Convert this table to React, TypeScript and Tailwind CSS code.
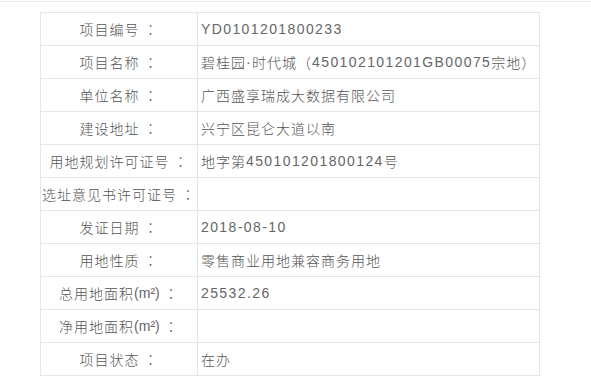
const latin = { fontFamily: '"Liberation Sans", sans-serif' };

// wrap ASCII runs so digits get Arial widths
function Mixed({ text, wide }: { text: string; wide?: boolean }) {
  const parts = text.split(/([\x20-\x7e\xb2\xb7]+)/);
  return (
    <>
      {parts.map((p, i) =>
        i % 2 === 1 ? (
          <span
            key={i}
            style={latin}
            className={wide ? "tracking-[1.4px] text-[#666]" : "tracking-normal text-[#666]"}
          >
            {p}
          </span>
        ) : (
          p
        )
      )}
    </>
  );
}

const rows: [string, string][] = [
  ["项目编号", "YD0101201800233"],
  ["项目名称", "碧桂园·时代城（450102101201GB00075宗地）"],
  ["单位名称", "广西盛享瑞成大数据有限公司"],
  ["建设地址", "兴宁区昆仑大道以南"],
  ["用地规划许可证号", "地字第450101201800124号"],
  ["选址意见书许可证号", ""],
  ["发证日期", "2018-08-10"],
  ["用地性质", "零售商业用地兼容商务用地"],
  ["总用地面积(m²)", "25532.26"],
  ["净用地面积(m²)", ""],
  ["项目状态", "在办"],
];

export default function App() {
  return (
    <div className="w-[591px] h-[380px] bg-white overflow-hidden">
      <div className="mt-px border-t border-[#e4eef6]" />
      <div className="pt-[10px] pl-[40px]">
        <div
          className="w-[500px] border-l border-r border-t border-[#e2e7ec] text-[14px] font-light text-[#555] tracking-[1px]"
          style={{ fontFamily: '"Noto Sans CJK SC", "Liberation Sans", sans-serif' }}
        >
          {rows.map(([label, value]) => (
            <div key={label} className="flex h-[33px] border-b border-[#e2e7ec]">
              <div className="w-[157px] shrink-0 flex items-center justify-center whitespace-nowrap border-r border-[#dde6f0]">
                <Mixed text={label} />
                &nbsp;
                <span style={{ fontFamily: '"Noto Sans CJK TC", sans-serif' }}>：</span>
              </div>
              <div className="flex-1 flex items-center pl-[3px] whitespace-nowrap">
                <Mixed text={value} wide />
              </div>
            </div>
          ))}
        </div>
      </div>
    </div>
  );
}
